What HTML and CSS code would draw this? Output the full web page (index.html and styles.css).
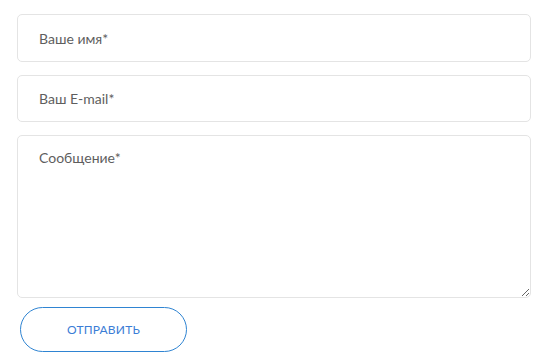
FILE: index.html
```html
<!DOCTYPE html>
<html lang="ru">
<head>
<meta charset="utf-8">
<link rel="stylesheet" href="styles.css">
</head>
<body>
<form class="form">
  <input class="field" type="text" placeholder="Ваше имя*">
  <input class="field" type="email" placeholder="Ваш E-mail*">
  <textarea class="field area" placeholder="Сообщение*"></textarea>
  <button class="btn" type="button">Отправить</button>
</form>
</body>
</html>
```

FILE: styles.css
```css
html, body {
  margin: 0;
  padding: 0;
  background: #fff;
}
.form {
  display: flex;
  flex-direction: column;
  align-items: flex-start;
  width: 514px;
  padding: 14px 0 0 17px;
  font-family: Lato, "Open Sans", sans-serif;
}
.field {
  box-sizing: border-box;
  width: 514px;
  height: 48px;
  margin: 0 0 13px 0;
  padding: 0 21px;
  border: 1px solid #e4e4e4;
  border-radius: 5px;
  background: #fff;
  font-family: Lato, "Open Sans", sans-serif;
  font-size: 14px;
  color: #5e5e5e;
  outline: none;
}
.field + .field {
  height: 47px;
}
.field::placeholder {
  color: #5e5e5e;
  opacity: 1;
}
.field.area {
  height: 163px;
  margin-bottom: 9px;
  padding: 13px 21px;
  resize: vertical;
  line-height: 17px;
}
.btn {
  box-sizing: border-box;
  width: 167px;
  height: 45px;
  margin-left: 3px;
  border: 1px solid #2f84d2;
  border-radius: 23px;
  background: #fff;
  color: #3b7dd6;
  font-family: Lato, "Open Sans", sans-serif;
  font-size: 12px;
  text-transform: uppercase;
  letter-spacing: 0.2px;
  cursor: pointer;
}
```
